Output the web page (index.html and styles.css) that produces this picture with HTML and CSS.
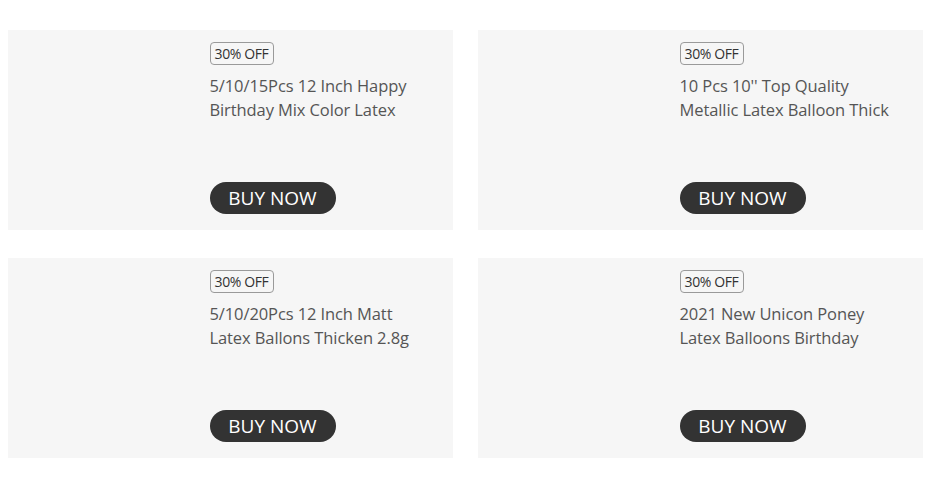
FILE: index.html
```html
<!DOCTYPE html>
<html>
<head>
<meta charset="utf-8">
<link rel="stylesheet" href="styles.css">
</head>
<body>
<div class="grid">
  <div class="card">
    <div class="pic"></div>
    <div class="info">
      <div class="top">
        <span class="badge">30% OFF</span>
        <p class="title">5/10/15Pcs 12 Inch Happy Birthday Mix Color Latex</p>
      </div>
      <a class="buy">BUY NOW</a>
    </div>
  </div>
  <div class="card">
    <div class="pic"></div>
    <div class="info">
      <div class="top">
        <span class="badge">30% OFF</span>
        <p class="title">10 Pcs 10'' Top Quality Metallic Latex Balloon Thick</p>
      </div>
      <a class="buy">BUY NOW</a>
    </div>
  </div>
  <div class="card">
    <div class="pic"></div>
    <div class="info">
      <div class="top">
        <span class="badge">30% OFF</span>
        <p class="title">5/10/20Pcs 12 Inch Matt Latex Ballons Thicken 2.8g</p>
      </div>
      <a class="buy">BUY NOW</a>
    </div>
  </div>
  <div class="card">
    <div class="pic"></div>
    <div class="info">
      <div class="top">
        <span class="badge">30% OFF</span>
        <p class="title">2021 New Unicon Poney Latex Balloons Birthday</p>
      </div>
      <a class="buy">BUY NOW</a>
    </div>
  </div>
</div>
</body>
</html>
```
FILE: styles.css
```css
html, body {
  margin: 0;
  background: #fff;
}
body {
  padding: 30px 0 0 8px;
  font-family: "Open Sans", "Noto Sans", sans-serif;
}
.grid {
  display: grid;
  grid-template-columns: 445px 445px;
  column-gap: 25px;
  row-gap: 28px;
}
.card {
  display: flex;
  height: 200px;
  background: #f6f6f6;
}
.pic {
  width: 201.5px;
  flex: none;
}
.info {
  flex: 1;
  display: flex;
  flex-direction: column;
  justify-content: space-between;
  padding: 12px 0 16px;
}
.badge {
  display: inline-block;
  box-sizing: border-box;
  width: 64px;
  height: 23px;
  line-height: 21px;
  text-align: center;
  border: 1px solid #9a9a9a;
  border-radius: 4px;
  font-size: 14px;
  color: #333;
  letter-spacing: -0.4px;
}
.title {
  margin: 9px 0 0;
  width: 222px;
  font-size: 16.5px;
  line-height: 24px;
  color: #555;
  letter-spacing: -0.1px;
}
.buy {
  display: flex;
  align-items: center;
  justify-content: center;
  width: 126px;
  height: 32px;
  border-radius: 16px;
  background: #333;
  color: #fff;
  font-size: 19px;
}
```
